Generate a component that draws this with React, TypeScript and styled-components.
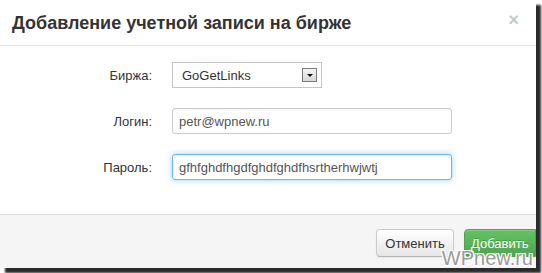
import React from "react";
import styled, { createGlobalStyle, css } from "styled-components";

const GlobalStyle = createGlobalStyle`
  html, body {
    margin: 0;
    padding: 0;
    background: #ffffff;
  }
  body {
    font-family: "Liberation Sans", Arial, sans-serif;
    color: #333333;
  }
`;

const Page = styled.div`
  position: relative;
  width: 542px;
  height: 273px;
  overflow: hidden;
`;

const Modal = styled.div`
  width: 536px;
  height: 268px;
  background: #ffffff;
  display: flex;
  flex-direction: column;
  box-shadow: 5px 5px 2px rgba(20, 20, 20, 0.9);
`;

const Header = styled.div`
  height: 45px;
  border-bottom: 1px solid #e5e5e5;
  display: flex;
  align-items: center;
  justify-content: space-between;
  padding: 0 17px 0 12px;
  box-sizing: content-box;
`;

const Title = styled.h3`
  margin: 0;
  padding-top: 2px;
  font-size: 18px;
  font-weight: bold;
  color: #333333;
`;

const Close = styled.span`
  font-size: 18px;
  font-weight: bold;
  color: #c8c8c8;
  line-height: 1;
  margin-top: -5px;
`;

const Body = styled.div`
  flex: 1;
  padding-top: 16px;
  display: flex;
  flex-direction: column;
  gap: 20px;
`;

const Row = styled.div`
  display: grid;
  grid-template-columns: 152px auto;
  column-gap: 20px;
  align-items: center;
`;

const Label = styled.label`
  text-align: right;
  font-size: 13px;
  color: #333333;
`;

const Field = styled.div<{ focused?: boolean; width: number }>`
  width: ${(p) => p.width}px;
  height: 26px;
  box-sizing: border-box;
  border: 1px solid #cccccc;
  border-radius: 3px;
  padding: 0 6px;
  display: flex;
  align-items: center;
  font-size: 13px;
  color: #555555;
  box-shadow: inset 0 1px 1px rgba(0, 0, 0, 0.06);
  ${(p) =>
    p.focused &&
    css`
      border-color: rgba(82, 168, 236, 0.85);
      box-shadow: inset 0 1px 1px rgba(0, 0, 0, 0.06),
        0 0 6px rgba(82, 168, 236, 0.55);
    `}
`;

const Select = styled.div`
  width: 150px;
  height: 26px;
  box-sizing: border-box;
  border: 1px solid #c4c4c4;
  padding: 0 4px 0 9px;
  display: flex;
  align-items: center;
  justify-content: space-between;
  font-size: 13px;
  color: #333333;
`;

const Arrow = styled.span`
  width: 13px;
  height: 12px;
  border: 1px solid #7a7a7a;
  background: linear-gradient(#f4f4f4, #d8d8d8);
  display: flex;
  align-items: center;
  justify-content: center;

  &:after {
    content: "";
    border-left: 3px solid transparent;
    border-right: 3px solid transparent;
    border-top: 3px solid #111111;
    margin-top: 1px;
  }
`;

const Footer = styled.div`
  height: 54px;
  border-top: 1px solid #dddddd;
  background: #f5f5f5;
  display: flex;
  justify-content: flex-end;
  align-items: flex-start;
  padding-top: 14px;
  gap: 10px;
  box-sizing: border-box;
`;

const Button = styled.button<{ primary?: boolean }>`
  width: 78px;
  height: 28px;
  padding: 0;
  font-family: "Liberation Sans", Arial, sans-serif;
  font-size: 13px;
  border-radius: 4px;
  color: #333333;
  border: 1px solid #cccccc;
  border-bottom-color: #b3b3b3;
  background: linear-gradient(#ffffff, #e6e6e6);
  box-shadow: inset 0 1px 0 rgba(255, 255, 255, 0.2),
    0 1px 2px rgba(0, 0, 0, 0.05);
  ${(p) =>
    p.primary &&
    css`
      width: 72px;
      padding: 0 0 0 6px;
      text-align: left;
      color: #ffffff;
      border-color: #51a351;
      border-radius: 4px 0 0 4px;
      background: linear-gradient(#62c462, #51a351);
      text-shadow: 0 -1px 0 rgba(0, 0, 0, 0.2);
    `}
`;

const Watermark = styled.span`
  position: absolute;
  right: 9px;
  bottom: 3px;
  font-family: "Liberation Sans", Arial, sans-serif;
  font-size: 20px;
  color: #9a9a9a;
  text-shadow: 1px 1px 0 #fff, -1px -1px 0 #fff, 1px -1px 0 #fff,
    -1px 1px 0 #fff;
`;

export default function App() {
  return (
    <Page>
      <GlobalStyle />
      <Modal>
        <Header>
          <Title>Добавление учетной записи на бирже</Title>
          <Close>×</Close>
        </Header>
        <Body>
          <Row>
            <Label>Биржа:</Label>
            <Select>
              GoGetLinks
              <Arrow />
            </Select>
          </Row>
          <Row>
            <Label>Логин:</Label>
            <Field width={280}>petr@wpnew.ru</Field>
          </Row>
          <Row>
            <Label>Пароль:</Label>
            <Field width={280} focused>
              gfhfghdfhgdfghdfghdfhsrtherhwjwtj
            </Field>
          </Row>
        </Body>
        <Footer>
          <Button>Отменить</Button>
          <Button primary>Добавить</Button>
        </Footer>
      </Modal>
      <Watermark>WPnew.ru</Watermark>
    </Page>
  );
}
